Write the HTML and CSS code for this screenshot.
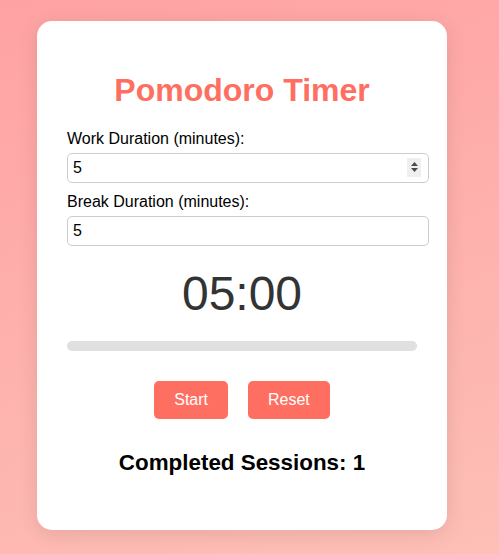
FILE: index.html
```html
<!DOCTYPE html>
<html>
<head>
<meta charset="utf-8">
<link rel="stylesheet" href="styles.css">
</head>
<body>
<div class="container">
  <h1>Pomodoro Timer</h1>
  <label for="work">Work Duration (minutes):</label>
  <div class="field">
    <input id="work" type="number" value="5">
    <span class="spin"><svg width="9" height="14" viewBox="0 0 9 14"><path d="M4.5 2 L8 6 L1 6 Z M1 8 L8 8 L4.5 12 Z" fill="#4a4a4a"/></svg></span>
  </div>
  <label for="brk">Break Duration (minutes):</label>
  <div class="field">
    <input id="brk" type="number" value="5">
  </div>
  <div class="timer">05:00</div>
  <div class="progress"><div class="bar" style="width:0%"></div></div>
  <div class="buttons">
    <button class="btn">Start</button><button class="btn">Reset</button>
  </div>
  <h2>Completed Sessions: 1</h2>
</div>
</body>
</html>
```
FILE: styles.css
```css
html, body {
  margin: 0;
  padding: 0;
}
body {
  font-family: "Liberation Sans", Arial, sans-serif;
  background: linear-gradient(165deg, #ffa2a3 0%, #fdbfb6 100%);
  min-height: 554px;
  box-sizing: border-box;
  padding: 21px 0 0 37px;
}
.container {
  width: 350px;
  background: #fff;
  border-radius: 15px;
  padding: 30px;
  box-shadow: 0 4px 20px rgba(0, 0, 0, 0.1);
  text-align: center;
}
h1 {
  color: #ff6f61;
  font-size: 32px;
  margin: 21.44px 0 20.4px;
}
label {
  display: block;
  text-align: left;
  font-size: 16px;
  color: #000;
  margin: 10px 0 5px;
}
.field {
  position: relative;
  text-align: left;
}
input {
  width: 350px;
  padding: 5px;
  font-size: 16px;
  font-family: "Liberation Sans", Arial, sans-serif;
  border: 1px solid #ccc;
  border-radius: 5px;
  margin: 0;
  color: #000;
  outline: none;
  -moz-appearance: textfield;
}
input::-webkit-inner-spin-button,
input::-webkit-outer-spin-button {
  -webkit-appearance: none;
  margin: 0;
}
.spin {
  position: absolute;
  left: 340px;
  top: 5px;
  width: 14px;
  height: 19px;
  background: #efefef;
  display: flex;
  align-items: center;
  justify-content: center;
}
.timer {
  font-size: 48px;
  color: #333;
  margin: 20px 0;
}
.progress {
  height: 10px;
  background: #e0e0e0;
  border-radius: 5px;
  margin: 19px 0 20px;
  overflow: hidden;
}
.bar {
  height: 100%;
  background: #ff6f61;
}
.buttons {
  display: flex;
  justify-content: center;
}
.btn {
  background: #ff6f61;
  color: #fff;
  border: none;
  border-radius: 5px;
  padding: 10px 20px;
  margin: 10px;
  font-size: 16px;
  font-family: "Liberation Sans", Arial, sans-serif;
}
h2 {
  font-size: 22.4px;
  margin: 21px 0 24px;
  color: #000;
}
```
